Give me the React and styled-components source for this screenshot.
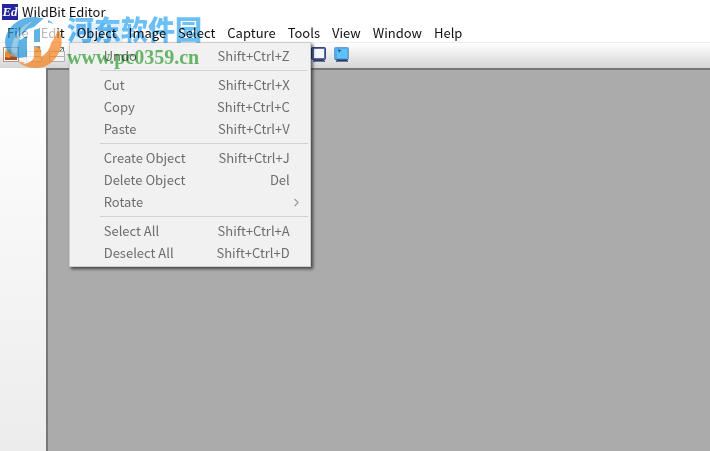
import React from 'react';
import styled, { createGlobalStyle } from 'styled-components';
import { ChevronRight } from 'lucide-react';

const menus = ['File', 'Edit', 'Object', 'Image', 'Select', 'Capture', 'Tools', 'View', 'Window', 'Help'];

const objectMenu = [
  [{ label: 'Undo', keys: 'Shift+Ctrl+Z' }],
  [
    { label: 'Cut', keys: 'Shift+Ctrl+X' },
    { label: 'Copy', keys: 'Shift+Ctrl+C' },
    { label: 'Paste', keys: 'Shift+Ctrl+V' },
  ],
  [
    { label: 'Create Object', keys: 'Shift+Ctrl+J' },
    { label: 'Delete Object', keys: 'Del' },
    { label: 'Rotate', submenu: true },
  ],
  [
    { label: 'Select All', keys: 'Shift+Ctrl+A' },
    { label: 'Deselect All', keys: 'Shift+Ctrl+D' },
  ],
];

function OpenIcon() {
  return (
    <svg width="16" height="16" viewBox="0 0 16 16">
      <rect x="0.5" y="0.5" width="15" height="14" fill="#fff" stroke="#b98f84" />
      <rect x="2" y="2" width="12" height="11" fill="#f9c58c" />
      <path d="M2 5l4-2 8 5v5H2z" fill="#ee8a2c" />
      <path d="M2 10l4 1 4-3 4 2v3H2z" fill="#a84b1c" />
      <path d="M8 2h6v4l-3-1z" fill="#fff0d8" />
    </svg>
  );
}

function PageIcon() {
  return (
    <svg width="16" height="16" viewBox="0 0 16 16">
      <path d="M0.5 4.5h15v10H0.5zM0.5 9.5h15" fill="#f5f5f5" stroke="#b0b0b0" />
      <path d="M10 5L14.5 .5M11 .5h3.5v3.5" fill="none" stroke="#5d8064" />
    </svg>
  );
}

function MonitorIcon({ cursor }) {
  return (
    <svg width="16" height="16" viewBox="0 0 16 16">
      <path d="M3 12h10l1 3H2z" fill="#34385f" />
      <rect x="0.5" y="0.5" width="14" height="12" rx="1" fill={cursor ? '#4aaee8' : '#5b6ea8'} stroke={cursor ? '#6f9fce' : '#36457d'} />
      <rect x="3" y="2" width="10" height="9" fill={cursor ? '#5fc1f6' : '#f4f7ff'} />
      {cursor && <path d="M4 2l4 2-2 0-1 2z" fill="#174b87" />}
      {cursor && <path d="M1 12.5h13" stroke="#3a5f9c" />}
      <path d="M3 14.5h10" stroke="#6a76a0" />
    </svg>
  );
}

function WatermarkLogo() {
  return (
    <svg width="60" height="56" viewBox="0 0 60 56">
      <circle cx="32" cy="31" r="24" fill="#fff" />
      <path d="M0 30C1 16 13 5 28 5c8 0 15 2 21 7-4-2-8-2-11 0l-2 19v4H22v10l-9 1C5 45 0 38 0 30z" fill="#1f93d8" />
      <path d="M7 45C4 31 12 15 28 9 17 17 11 29 12 45z" fill="#fff" opacity="0.35" />
      <path d="M53 17c4 6 5 14 2 21-4 11-13 18-24 18-7 0-13-2-18-6 9 1 17 0 23-5 5-3 9-8 10-14 3-4 6-9 7-14z" fill="#f5821f" />
      <path d="M29 35h7v11l-13 6c4-4 6-8 6-12z" fill="#f5821f" />
      <path d="M14 25l9-8 6-2v29c0 4-4 7-11 8 3-3 4-5 4-9V24l-7 4z" fill="#fff" />
      <path d="M29 15l9-8h5v31h-8V16l-6 2z" fill="#fff" />
      <path d="M29 30h14v4H29z" fill="#fff" />
    </svg>
  );
}

function App() {
  return (
    <>
      <GlobalStyle />
      <Window>
        <TitleBar>
          <AppIcon>Ed</AppIcon>
          <Title>WildBit Editor</Title>
        </TitleBar>
        <MenuBar>
          {menus.map((name) => (
            <MenuSlot key={name}>
              <MenuButton type="button" $open={name === 'Object'}>{name}</MenuButton>
              {name === 'Object' && (
                <Popup>
                  {objectMenu.map((group) => (
                    <Group key={group[0].label}>
                      {group.map((item) => (
                        <Item key={item.label} type="button" disabled>
                          <span>{item.label}</span>
                          {item.submenu ? <Arrow size={13} /> : <span>{item.keys}</span>}
                        </Item>
                      ))}
                    </Group>
                  ))}
                </Popup>
              )}
            </MenuSlot>
          ))}
        </MenuBar>
        <ToolBar>
          <ToolGroup>
            <Tool type="button" aria-label="Open"><OpenIcon /></Tool>
            <Tool type="button" aria-label="Import"><PageIcon /></Tool>
            <Tool type="button" aria-label="Export"><PageIcon /></Tool>
          </ToolGroup>
          <ToolGroup>
            <Tool type="button" aria-label="Full screen"><MonitorIcon /></Tool>
            <Tool type="button" aria-label="Desktop"><MonitorIcon cursor /></Tool>
          </ToolGroup>
        </ToolBar>
        <Body>
          <SidePanel />
          <Workspace />
        </Body>
        <LogoLayer>
          <WatermarkLogo />
        </LogoLayer>
        <TextLayer>
          <SiteName>河东软件园</SiteName>
          <SiteUrl>www.pc0359.cn</SiteUrl>
        </TextLayer>
      </Window>
    </>
  );
}

export default App;

const GlobalStyle = createGlobalStyle`
  * {
    box-sizing: border-box;
  }

  body {
    margin: 0;
    font-family: "Noto Sans CJK SC", "Noto Sans", sans-serif;
    font-size: 13px;
    color: #111;
  }

  button {
    border: 0;
    padding: 0;
    background: none;
    font: inherit;
    color: inherit;
  }
`;

const Window = styled.div`
  position: relative;
  display: flex;
  flex-direction: column;
  min-height: 100vh;
  background: #fff;
`;

const TitleBar = styled.header`
  display: flex;
  align-items: center;
  gap: 4px;
  height: 23px;
  padding: 0 2px;
`;

const AppIcon = styled.span`
  width: 16px;
  height: 16px;
  background: #24249b;
  color: #fff;
  font: italic bold 13px/16px "Liberation Serif", serif;
  text-align: center;
`;

const Title = styled.span`
  line-height: 22px;
`;

const MenuBar = styled.nav`
  display: flex;
  height: 19px;
  padding-left: 1px;
`;

const MenuSlot = styled.div`
  position: relative;
`;

const MenuButton = styled.button`
  display: block;
  height: 19px;
  padding: 0 6px;
  line-height: 19px;
  background: ${(props) => (props.$open ? '#e0f0fc' : 'transparent')};
`;

const Popup = styled.div`
  position: absolute;
  z-index: 2;
  top: 100%;
  left: -2px;
  width: 242px;
  padding: 2px;
  background: #f1f1f1;
  border: 1px solid #ccc;
  box-shadow: 2px 2px 3px rgba(0, 0, 0, 0.6);
`;

const Group = styled.div`
  & + & {
    padding-top: 7px;
    background: linear-gradient(#d2d2d2, #d2d2d2) 28px 3px / 100% 1px no-repeat;
  }
`;

const Item = styled.button`
  display: flex;
  align-items: center;
  justify-content: space-between;
  width: 100%;
  height: 22px;
  padding: 0 18px 0 32px;
  line-height: 22px;
  color: #6d6d6d;
`;

const Arrow = styled(ChevronRight)`
  margin-right: -13px;
  color: #999;
`;

const ToolBar = styled.div`
  display: flex;
  align-items: flex-start;
  gap: 246px;
  height: 28px;
  padding: 4px 3px;
  background: linear-gradient(#fff, #d5d5d5);
  border-top: 1px solid #eee;
  border-bottom: 2px solid #777;
`;

const ToolGroup = styled.div`
  display: flex;
  gap: 7px;
`;

const Tool = styled.button`
  width: 16px;
  height: 16px;

  > svg {
    display: block;
  }
`;

const Body = styled.main`
  display: flex;
  flex: 1;
`;

const SidePanel = styled.aside`
  width: 48px;
  margin-top: -2px;
  background: linear-gradient(#fff, #ececec);
  border-right: 2px solid #777;
`;

const Workspace = styled.section`
  flex: 1;
  background: #ababab;
`;

// site mark laid over the window
const LogoLayer = styled.div`
  position: absolute;
  z-index: 3;
  top: 12px;
  left: 5px;
  pointer-events: none;
  opacity: 0.7;
`;

const TextLayer = styled.div`
  position: absolute;
  z-index: 3;
  top: 11px;
  left: 67px;
  display: flex;
  flex-direction: column;
  pointer-events: none;
  mix-blend-mode: multiply;
`;

const SiteName = styled.span`
  color: #6cc0f6;
  font-size: 27px;
  font-weight: 900;
  line-height: 36px;
`;

const SiteUrl = styled.span`
  color: #6cc06c;
  font: bold 20px/20px "Liberation Serif", serif;
`;
